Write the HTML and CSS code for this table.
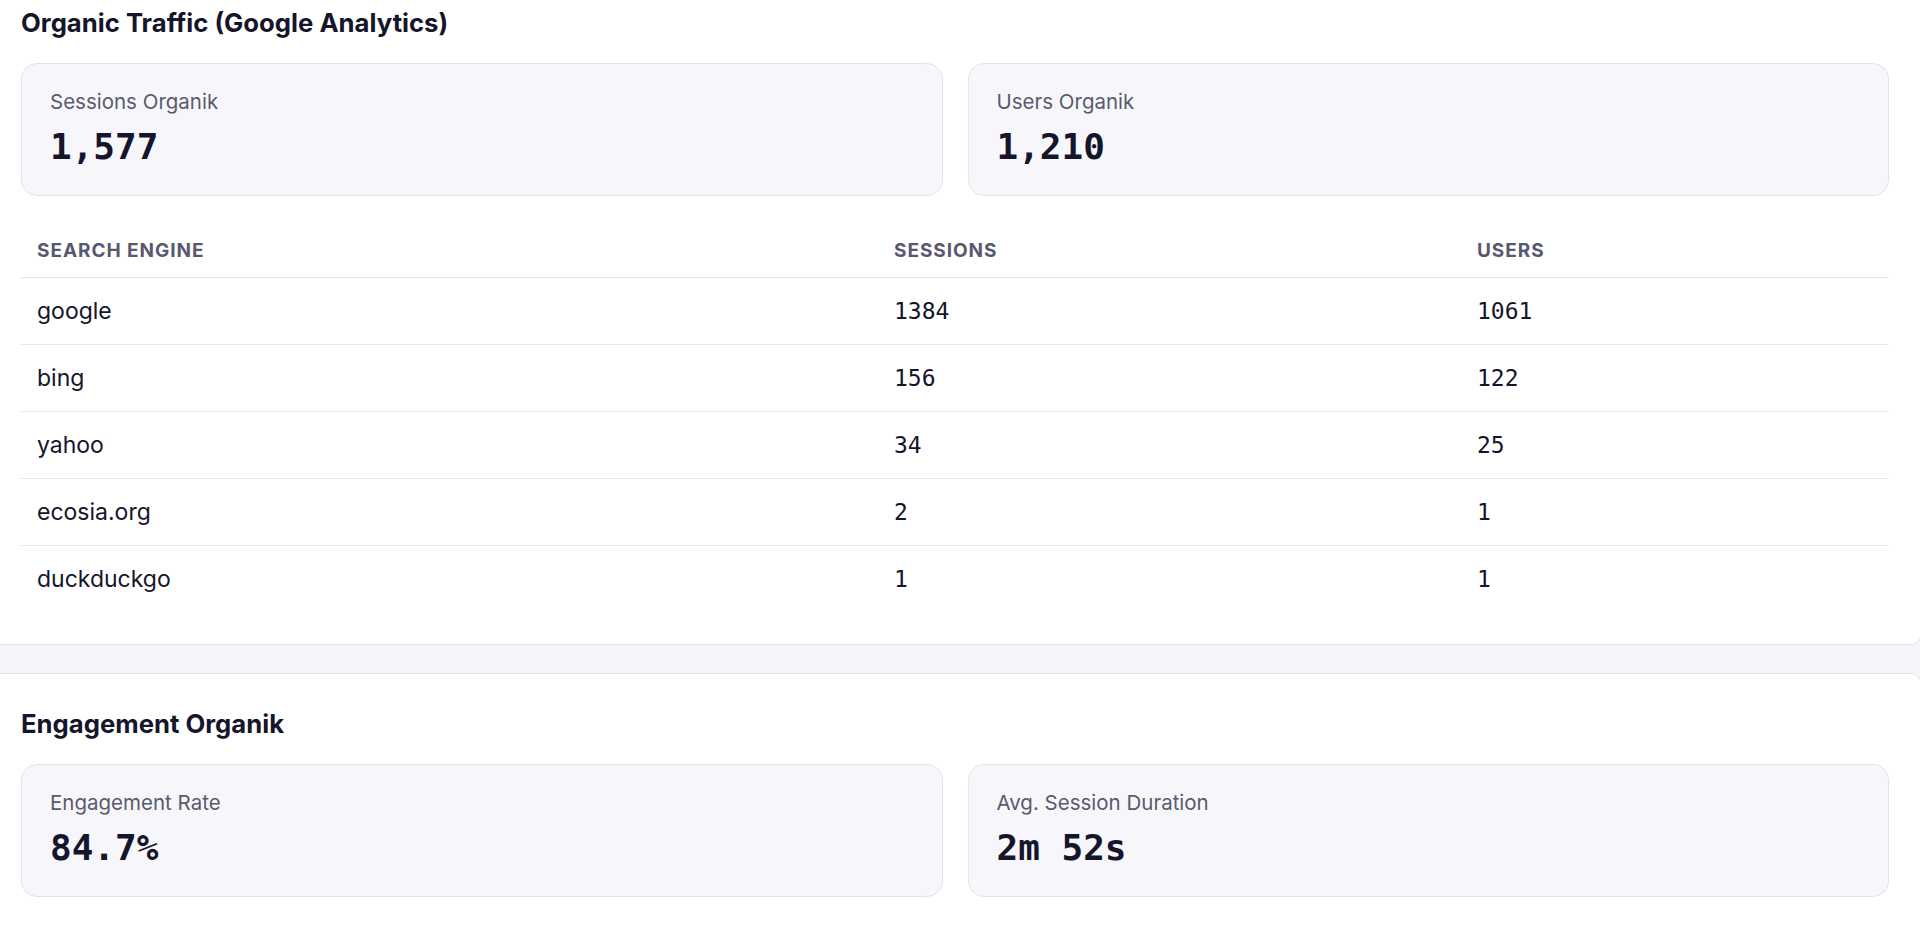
FILE: index.html
```html
<!DOCTYPE html>
<html lang="en">
<head>
<meta charset="utf-8">
<title>Organic Traffic</title>
<link rel="stylesheet" href="styles.css">
</head>
<body>
<div class="page">
  <section class="panel panel-first">
    <h2 class="panel-title">Organic Traffic (Google Analytics)</h2>
    <div class="stats">
      <div class="stat-card">
        <div class="stat-label">Sessions Organik</div>
        <div class="stat-value">1,577</div>
      </div>
      <div class="stat-card">
        <div class="stat-label">Users Organik</div>
        <div class="stat-value">1,210</div>
      </div>
    </div>
    <table class="data-table">
      <colgroup>
        <col class="col-engine">
        <col class="col-sessions">
        <col class="col-users">
      </colgroup>
      <thead>
        <tr><th>Search Engine</th><th>Sessions</th><th>Users</th></tr>
      </thead>
      <tbody>
        <tr><td>google</td><td class="num">1384</td><td class="num">1061</td></tr>
        <tr><td>bing</td><td class="num">156</td><td class="num">122</td></tr>
        <tr><td>yahoo</td><td class="num">34</td><td class="num">25</td></tr>
        <tr><td>ecosia.org</td><td class="num">2</td><td class="num">1</td></tr>
        <tr><td>duckduckgo</td><td class="num">1</td><td class="num">1</td></tr>
      </tbody>
    </table>
  </section>
  <section class="panel panel-second">
    <h2 class="panel-title">Engagement Organik</h2>
    <div class="stats">
      <div class="stat-card">
        <div class="stat-label">Engagement Rate</div>
        <div class="stat-value">84.7%</div>
      </div>
      <div class="stat-card">
        <div class="stat-label">Avg. Session Duration</div>
        <div class="stat-value">2m 52s</div>
      </div>
    </div>
  </section>
</div>
</body>
</html>
```
FILE: styles.css
```css
html, body {
  margin: 0;
  padding: 0;
  overflow: hidden;
}
body {
  background: #f6f6fa;
  font-family: Inter, "Noto Sans", sans-serif;
  color: #15152b;
}
.page {
  display: flex;
  flex-direction: column;
  gap: 28px;
  margin-left: -12px;
  width: 1934px;
}
.panel {
  background: #ffffff;
  border: 1px solid #e3e3ee;
  border-radius: 12px;
  padding: 0 32px 32px 32px;
}
.panel-first {
  border-top: none;
  border-top-left-radius: 0;
  border-top-right-radius: 0;
  padding-top: 7px;
}
.panel-second {
  padding-top: 34px;
  min-height: 260px;
}
.panel-title {
  margin: 0 0 24px 0;
  font-size: 25.7px;
  line-height: 32px;
  font-weight: 700;
  color: #15152b;
}
.stats {
  display: grid;
  grid-template-columns: 1fr 1fr;
  gap: 25px;
}
.stat-card {
  background: #f7f7fb;
  border: 1px solid #e3e3ee;
  border-radius: 16px;
  padding: 24px 28px 27px 28px;
}
.stat-label {
  font-size: 20.5px;
  line-height: 28px;
  color: #5a5a6e;
}
.stat-value {
  margin-top: 10px;
  font-family: "DejaVu Sans Mono", "Liberation Mono", monospace;
  font-size: 36px;
  line-height: 42px;
  font-weight: 700;
  color: #15152b;
}
.data-table {
  width: 100%;
  margin-top: 29px;
  border-collapse: collapse;
}
.col-engine { width: 857px; }
.col-sessions { width: 583px; }
.data-table th {
  text-align: left;
  text-transform: uppercase;
  font-size: 19px;
  line-height: 24px;
  font-weight: 700;
  letter-spacing: 0.05em;
  color: #585870;
  padding: 14px 16px;
  border-bottom: 1px solid #e3e3ee;
}
.data-table td {
  font-size: 23px;
  line-height: 30px;
  padding: 18px 16px;
  color: #15152b;
  border-bottom: 1px solid #e6e6f0;
}
.data-table tbody tr:last-child td {
  border-bottom: none;
}
.data-table td.num {
  font-family: "DejaVu Sans Mono", "Liberation Mono", monospace;
  font-size: 23px;
}
```
